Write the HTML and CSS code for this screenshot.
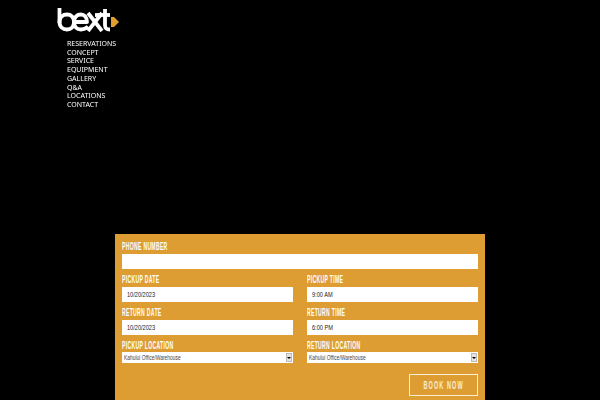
FILE: index.html
```html
<!DOCTYPE html>
<html lang="en">
<head>
<meta charset="utf-8">
<title>Best Reservations</title>
<link rel="stylesheet" href="styles.css">
</head>
<body>
<header class="site-header">
  <a class="logo" href="#" aria-label="best">
    <svg width="62" height="24" viewBox="0 0 62 24" fill="none">
      <g stroke="#fff" stroke-width="3.800" stroke-linejoin="round">
        <path d="M2.500 0V15"/>
        <path d="M2.500 14C2.500 9 6 6.500 10 6.500C14 6.500 17 9 17 14C17 19 14 21.500 10 21.500C6 21.500 2.500 19 2.500 14Z"/>
        <path d="M17 14H30C30 9 27 6.500 24 6.500C20 6.500 17 9 17 14C17 19 20 21.500 24 21.500C27 21.500 29 20.500 31 18.500"/>
        <path d="M31 5L45 23"/>
        <path d="M45 5L31 23"/>
        <path d="M48 1V17C48 20 49 21.500 53 21.500"/>
        <path d="M38 7H53"/>
      </g>
      <path d="M54 9H57L62 14L57 19H54Z" fill="#e0a030"/>
    </svg>
  </a>
  <nav class="menu">
    <a href="#">RESERVATIONS</a>
    <a href="#">CONCEPT</a>
    <a href="#">SERVICE</a>
    <a href="#">EQUIPMENT</a>
    <a href="#">GALLERY</a>
    <a href="#">Q&amp;A</a>
    <a href="#">LOCATIONS</a>
    <a href="#">CONTACT</a>
  </nav>
</header>
<main class="panel">
  <form class="form">
    <div class="field full"><span class="label">PHONE NUMBER</span><div class="input"></div></div>
    <div class="field"><span class="label">PICKUP DATE</span><div class="input"><span class="value">10/20/2023</span></div></div>
    <div class="field"><span class="label">PICKUP TIME</span><div class="input"><span class="value">9:00 AM</span></div></div>
    <div class="field"><span class="label">RETURN DATE</span><div class="input"><span class="value">10/20/2023</span></div></div>
    <div class="field"><span class="label">RETURN TIME</span><div class="input"><span class="value">6:00 PM</span></div></div>
    <div class="field"><span class="label">PICKUP LOCATION</span><div class="select"><span class="option">Kahului Office/Warehouse</span><i class="arrow"></i></div></div>
    <div class="field"><span class="label">RETURN LOCATION</span><div class="select"><span class="option">Kahului Office/Warehouse</span><i class="arrow"></i></div></div>
    <div class="actions"><div class="button"><span class="button-text">BOOK NOW</span></div></div>
  </form>
</main>
</body>
</html>
```
FILE: styles.css
```css
html, body {
  margin: 0;
  height: 100%;
  overflow: hidden;
  background: #000;
}
body {
  font-family: "Liberation Sans", sans-serif;
}
.site-header {
  height: 234px;
  box-sizing: border-box;
  padding: 8px 0 0 57px;
}
.logo {
  display: block;
  height: 32px;
}
.logo svg {
  display: block;
}
.menu {
  margin: 0 0 0 10px;
  display: flex;
  flex-direction: column;
  font-family: "Noto Sans", sans-serif;
  font-size: 7px;
  line-height: 8.700px;
  will-change: transform;
}
.menu a {
  color: #fff;
  text-decoration: none;
}
.panel {
  width: 370px;
  margin-left: 115px;
  height: 166px;
  box-sizing: border-box;
  background: #dd9d33;
  padding: 7px 7px 0;
}
.form {
  display: grid;
  grid-template-columns: 171px 171px;
  column-gap: 14px;
}
.field {
  display: flex;
  flex-direction: column;
  height: 33px;
}
.field.full {
  grid-column: 1 / -1;
}
.label {
  display: block;
  color: #fff;
  font-weight: 700;
  font-size: 10px;
  line-height: 12px;
  margin-bottom: 1px;
  letter-spacing: 0.600px;
  white-space: nowrap;
  transform: scaleX(0.51);
  transform-origin: left center;
}
.input {
  box-sizing: border-box;
  height: 15px;
  padding: 0 5px;
  background: #fff;
  display: flex;
  align-items: center;
}
.value {
  color: #222;
  font-size: 8px;
  white-space: nowrap;
  transform: scaleX(0.7);
  transform-origin: left center;
}
.select {
  box-sizing: border-box;
  height: 11px;
  margin-top: -1px;
  background: #fff;
  padding-left: 2px;
  display: flex;
  align-items: center;
  justify-content: space-between;
  overflow: hidden;
}
.option {
  color: #444;
  font-size: 7px;
  white-space: nowrap;
  transform: scaleX(0.7);
  transform-origin: left center;
}
.arrow {
  width: 6px;
  height: 9px;
  margin-right: 1px;
  box-sizing: border-box;
  background: #e4e4e4;
  border: 1px solid #bbb;
  display: flex;
  align-items: center;
  justify-content: center;
}
.arrow::after {
  content: "";
  border-left: 2px solid transparent;
  border-right: 2px solid transparent;
  border-top: 2px solid #000;
}
.actions {
  grid-column: 2;
  display: flex;
  justify-content: flex-end;
  margin-top: 1px;
}
.button {
  width: 69px;
  height: 22px;
  box-sizing: border-box;
  border: 1px solid #fbeed5;
  display: flex;
  align-items: center;
  justify-content: center;
}
.button-text {
  color: #fbeed5;
  font-weight: 700;
  font-size: 10px;
  letter-spacing: 2px;
  white-space: nowrap;
  transform: scaleX(0.55);
}
```
